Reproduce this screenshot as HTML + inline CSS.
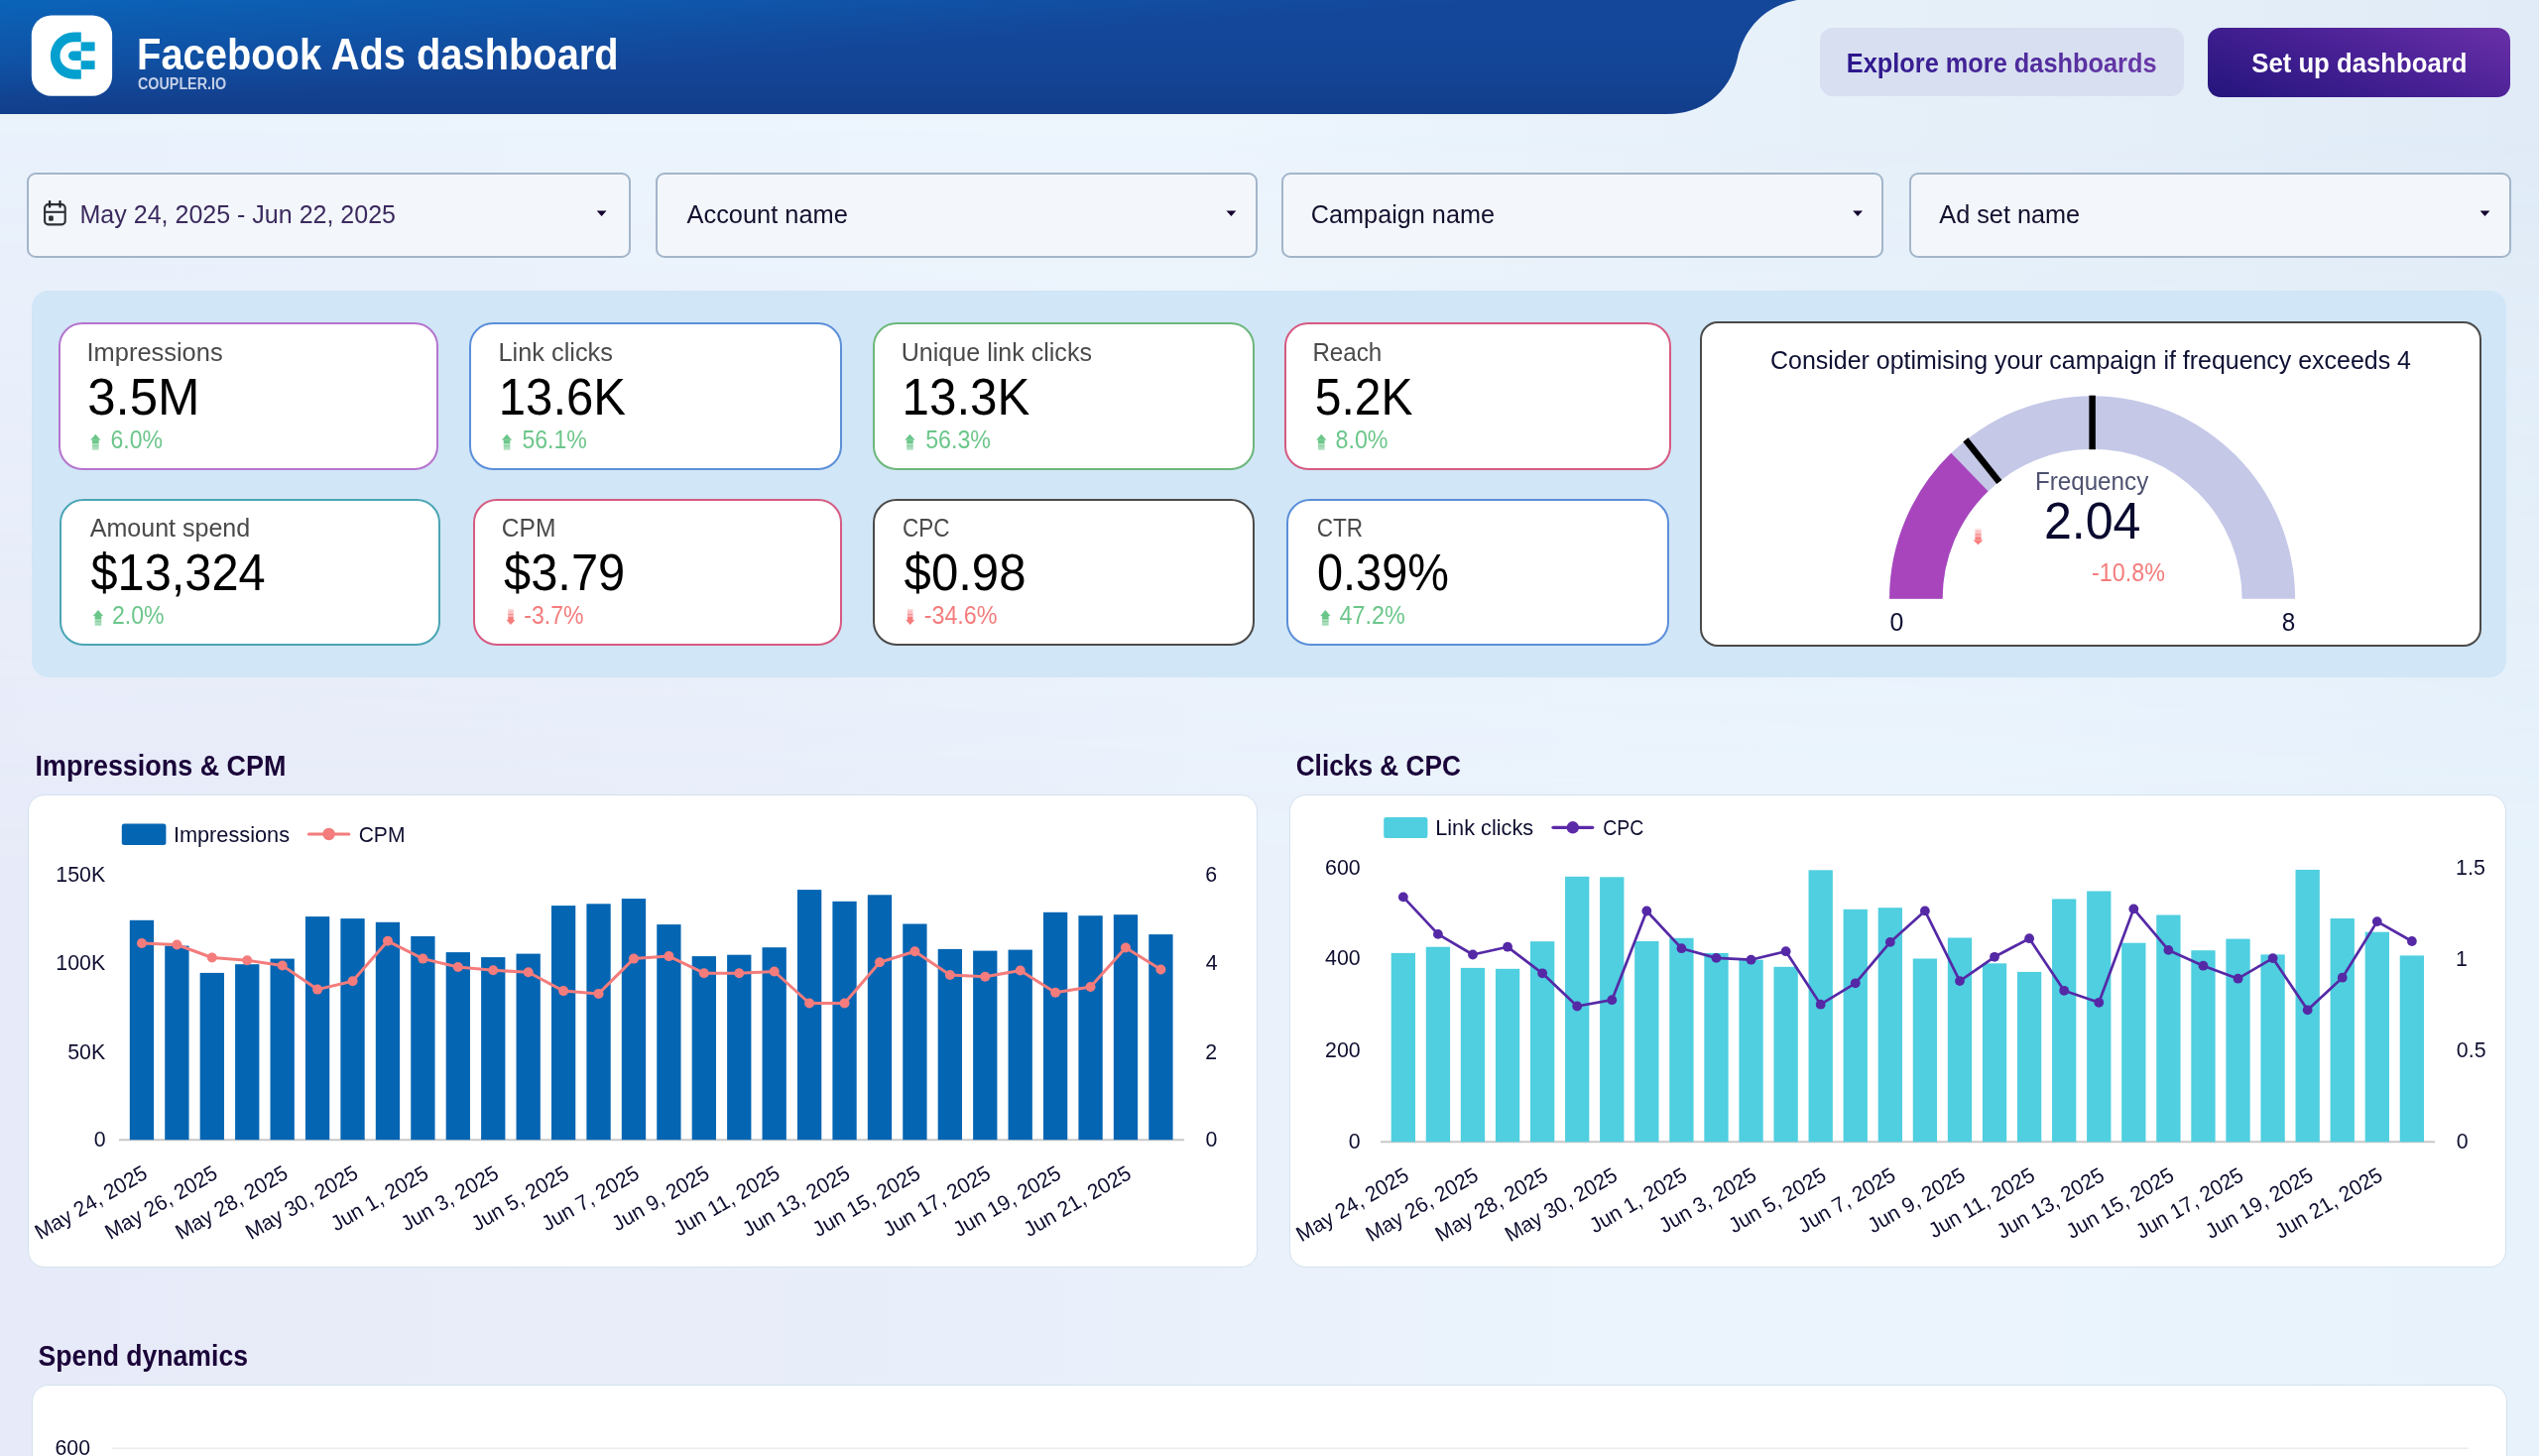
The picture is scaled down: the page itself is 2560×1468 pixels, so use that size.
<!DOCTYPE html>
<html><head><meta charset="utf-8"><title>Facebook Ads dashboard</title>
<style>
html,body{margin:0;padding:0;overflow:hidden}
body{width:2560px;height:1468px;overflow:hidden;position:relative;font-family:"Liberation Sans",sans-serif;
background:linear-gradient(90deg,#eaf2fc 0%,#edf5fd 45%,#e6f0f9 75%,#e0ebf7 100%)}
.bgb{left:0;top:0;width:2560px;height:1468px;background:linear-gradient(90deg,#e7eaf8 0%,#e8edf9 25%,#eaf1fb 50%,#ebf4fd 75%,#e7f2fb 100%);
-webkit-mask-image:linear-gradient(180deg,transparent 0%,transparent 8%,#000 60%,#000 100%);mask-image:linear-gradient(180deg,transparent 0%,transparent 8%,#000 60%,#000 100%)}
.a{position:absolute;box-sizing:border-box}
.dd{background:#f3f7fb;border:2px solid #a3b5ca;border-radius:9px}
.panel{background:#d1e6f6;border-radius:17px}
.card{background:#fff;border:2px solid #888;border-radius:24px}
.cc{background:#fff;border:1.6px solid #d3e2ee;border-radius:17px}
svg{position:absolute;left:0;top:0}
</style></head><body>

<div class="a bgb"></div>
<svg width="2560" height="130" style="z-index:0">
<defs>
<linearGradient id="hg" gradientUnits="userSpaceOnUse" x1="0" y1="0" x2="8.6" y2="114.4">
<stop offset="0" stop-color="#0a64b9"/><stop offset="1" stop-color="#14479a"/></linearGradient>
<linearGradient id="hg2" gradientUnits="userSpaceOnUse" x1="0" y1="0" x2="0" y2="115">
<stop offset="0" stop-color="#0e2a6a" stop-opacity="0"/><stop offset="0.55" stop-color="#0e2a6a" stop-opacity="0.05"/><stop offset="1" stop-color="#0e2a6a" stop-opacity="0.32"/></linearGradient>
</defs>
<path d="M0 0 H1812 C1770 8 1756 40 1752 58 C1744 95 1715 115 1680 115 H0 Z" fill="url(#hg)"/>
<path d="M0 0 H1812 C1770 8 1756 40 1752 58 C1744 95 1715 115 1680 115 H0 Z" fill="url(#hg2)"/>
</svg>
<div class="a" style="left:1835px;top:28px;width:367px;height:69px;background:#d8dff0;border-radius:13px"></div>
<div class="a" style="left:2226px;top:28px;width:305px;height:70px;border-radius:13px;background:linear-gradient(20deg,#24157c 0%,#4a2196 55%,#6a30a8 100%)"></div>
<div class="a dd" style="left:27.2px;top:173.9px;width:609.0px;height:86.2px"></div>
<div class="a dd" style="left:661.0px;top:173.9px;width:607.4px;height:86.2px"></div>
<div class="a dd" style="left:1291.5px;top:173.9px;width:607.4px;height:86.2px"></div>
<div class="a dd" style="left:1924.6px;top:173.9px;width:607.6px;height:86.2px"></div>
<div class="a panel" style="left:32px;top:293px;width:2495px;height:390px"></div>
<div class="a card" style="left:58.8px;top:325.0px;width:383.2px;height:149.0px;border-color:#b574cf"></div>
<div class="a card" style="left:473.4px;top:325.2px;width:375.4px;height:148.7px;border-color:#5b8fd9"></div>
<div class="a card" style="left:880.1px;top:325.2px;width:385.0px;height:148.5px;border-color:#6cb77b"></div>
<div class="a card" style="left:1294.7px;top:325.2px;width:390.3px;height:148.5px;border-color:#d65a82"></div>
<div class="a card" style="left:59.9px;top:502.5px;width:383.9px;height:148.7px;border-color:#4aa5b5"></div>
<div class="a card" style="left:476.5px;top:502.5px;width:372.2px;height:148.7px;border-color:#d65a82"></div>
<div class="a card" style="left:880.1px;top:502.5px;width:385.0px;height:148.7px;border-color:#4a4a4a"></div>
<div class="a card" style="left:1297.3px;top:502.5px;width:386.2px;height:148.7px;border-color:#5b8fd9"></div>
<div class="a card" style="left:1713.5px;top:324px;width:788px;height:327.5px;border-color:#4a4a4a;border-radius:18px"></div>
<div class="a cc" style="left:27.6px;top:800.6px;width:1240.4px;height:477.8px"></div>
<div class="a cc" style="left:1299.7px;top:800.6px;width:1227.6px;height:477.8px"></div>
<div class="a cc" style="left:32px;top:1396px;width:2495.5px;height:120px"></div>
<svg width="2560" height="1468" style="z-index:5;will-change:transform" font-family="Liberation Sans, sans-serif">
<defs>
<linearGradient id="btxt" x1="0" y1="0" x2="1" y2="0"><stop offset="0" stop-color="#2a168c"/><stop offset="1" stop-color="#6a3aa8"/></linearGradient>
</defs>
<rect x="31.8" y="15.5" width="81.3" height="81.3" rx="20" fill="#fff"/>
<path d="M81.8 32.55 H74.50 A23.65 23.65 0 0 0 74.50 79.85 H81.8 V70.20 H74.50 A14.0 14.0 0 0 1 74.50 42.20 H81.8 Z" fill="#03a0cf"/>
<path d="M81.8 51.4 H73.75 A4.75 4.75 0 0 0 73.75 60.9 H81.8 Z" fill="#03a0cf"/>
<rect x="81.6" y="42.4" width="14" height="9" fill="#03a0cf"/><rect x="81.6" y="61.2" width="14" height="8.7" fill="#03a0cf"/>
<text x="138.11" y="70.30" font-size="44.33" font-weight="700" fill="#ffffff" textLength="485.60" lengthAdjust="spacingAndGlyphs" >Facebook Ads dashboard</text>
<text x="139.03" y="89.80" font-size="16.13" font-weight="700" fill="#c3d0e8" textLength="89.09" lengthAdjust="spacingAndGlyphs" >COUPLER.IO</text>
<text x="1861.79" y="72.60" font-size="27.91" font-weight="700" fill="url(#btxt)" textLength="312.78" lengthAdjust="spacingAndGlyphs" >Explore more dashboards</text>
<text x="2270.23" y="72.60" font-size="27.91" font-weight="700" fill="#ffffff" textLength="217.26" lengthAdjust="spacingAndGlyphs" >Set up dashboard</text>
<text x="80.54" y="225.20" font-size="26.02" font-weight="400" fill="#3b2a5e" textLength="318.50" lengthAdjust="spacingAndGlyphs" >May 24, 2025 - Jun 22, 2025</text>
<text x="692.54" y="224.70" font-size="26.02" font-weight="400" fill="#14102e" textLength="162.35" lengthAdjust="spacingAndGlyphs" >Account name</text>
<text x="1321.84" y="224.70" font-size="26.02" font-weight="400" fill="#14102e" textLength="185.14" lengthAdjust="spacingAndGlyphs" >Campaign name</text>
<text x="1955.34" y="224.70" font-size="26.02" font-weight="400" fill="#14102e" textLength="141.78" lengthAdjust="spacingAndGlyphs" >Ad set name</text>
<path d="M601.7 212.6 L611.5 212.6 L606.6 217.9 Z" fill="#12002f"/>
<path d="M1236.5 212.6 L1246.3 212.6 L1241.4 217.9 Z" fill="#12002f"/>
<path d="M1868.2 212.6 L1878.0 212.6 L1873.1 217.9 Z" fill="#12002f"/>
<path d="M2500.6 212.6 L2510.4 212.6 L2505.5 217.9 Z" fill="#12002f"/>
<g fill="none" stroke="#2e3035" stroke-width="2.1"><rect x="45.1" y="206.1" width="20.6" height="20.3" rx="3.5"/><line x1="45.1" y1="213.8" x2="65.7" y2="213.8"/></g><g stroke="#23252a" stroke-width="2.3" stroke-linecap="round"><line x1="50.1" y1="203.2" x2="50.1" y2="208.6"/><line x1="60.5" y1="203.2" x2="60.5" y2="208.6"/></g><rect x="49.1" y="217.5" width="4.7" height="5.3" rx="1.2" fill="#2e3035"/>
<text x="87.55" y="363.80" font-size="25.73" font-weight="400" fill="#4a4a4a" textLength="137.06" lengthAdjust="spacingAndGlyphs" >Impressions</text>
<text x="88.29" y="417.50" font-size="51.75" font-weight="400" fill="#000000" textLength="113.25" lengthAdjust="spacingAndGlyphs" >3.5M</text>
<text x="111.55" y="451.80" font-size="25.15" font-weight="400" fill="#6cc68a" textLength="52.44" lengthAdjust="spacingAndGlyphs" >6.0%</text>
<path d="M96.35 437.70 L101.50 443.70 L91.20 443.70 Z" fill="#6cc68a"/><rect x="93.05" y="443.70" width="6.6" height="3.6" fill="#6cc68a"/><rect x="93.05" y="447.30" width="6.6" height="1.32" fill="#6cc68a" opacity="0.55"/><rect x="93.05" y="448.62" width="6.6" height="1.32" fill="#6cc68a" opacity="0.85"/><rect x="93.05" y="449.94" width="6.6" height="1.32" fill="#6cc68a" opacity="0.6"/><rect x="93.05" y="451.26" width="6.6" height="1.32" fill="#6cc68a" opacity="0.75"/><rect x="93.05" y="452.58" width="6.6" height="1.32" fill="#6cc68a" opacity="0.4"/>
<text x="502.51" y="363.80" font-size="25.73" font-weight="400" fill="#4a4a4a" textLength="115.46" lengthAdjust="spacingAndGlyphs" >Link clicks</text>
<text x="502.82" y="417.50" font-size="51.75" font-weight="400" fill="#000000" textLength="128.21" lengthAdjust="spacingAndGlyphs" >13.6K</text>
<text x="526.48" y="451.80" font-size="25.15" font-weight="400" fill="#6cc68a" textLength="65.38" lengthAdjust="spacingAndGlyphs" >56.1%</text>
<path d="M511.05 437.70 L516.20 443.70 L505.90 443.70 Z" fill="#6cc68a"/><rect x="507.75" y="443.70" width="6.6" height="3.6" fill="#6cc68a"/><rect x="507.75" y="447.30" width="6.6" height="1.32" fill="#6cc68a" opacity="0.55"/><rect x="507.75" y="448.62" width="6.6" height="1.32" fill="#6cc68a" opacity="0.85"/><rect x="507.75" y="449.94" width="6.6" height="1.32" fill="#6cc68a" opacity="0.6"/><rect x="507.75" y="451.26" width="6.6" height="1.32" fill="#6cc68a" opacity="0.75"/><rect x="507.75" y="452.58" width="6.6" height="1.32" fill="#6cc68a" opacity="0.4"/>
<text x="908.76" y="363.80" font-size="25.73" font-weight="400" fill="#4a4a4a" textLength="192.21" lengthAdjust="spacingAndGlyphs" >Unique link clicks</text>
<text x="909.61" y="417.50" font-size="51.75" font-weight="400" fill="#000000" textLength="128.73" lengthAdjust="spacingAndGlyphs" >13.3K</text>
<text x="933.17" y="451.80" font-size="25.15" font-weight="400" fill="#6cc68a" textLength="65.79" lengthAdjust="spacingAndGlyphs" >56.3%</text>
<path d="M917.45 437.70 L922.60 443.70 L912.30 443.70 Z" fill="#6cc68a"/><rect x="914.15" y="443.70" width="6.6" height="3.6" fill="#6cc68a"/><rect x="914.15" y="447.30" width="6.6" height="1.32" fill="#6cc68a" opacity="0.55"/><rect x="914.15" y="448.62" width="6.6" height="1.32" fill="#6cc68a" opacity="0.85"/><rect x="914.15" y="449.94" width="6.6" height="1.32" fill="#6cc68a" opacity="0.6"/><rect x="914.15" y="451.26" width="6.6" height="1.32" fill="#6cc68a" opacity="0.75"/><rect x="914.15" y="452.58" width="6.6" height="1.32" fill="#6cc68a" opacity="0.4"/>
<text x="1323.40" y="363.80" font-size="25.73" font-weight="400" fill="#4a4a4a" textLength="69.92" lengthAdjust="spacingAndGlyphs" >Reach</text>
<text x="1325.78" y="417.50" font-size="51.75" font-weight="400" fill="#000000" textLength="98.60" lengthAdjust="spacingAndGlyphs" >5.2K</text>
<text x="1346.61" y="451.80" font-size="25.15" font-weight="400" fill="#6cc68a" textLength="52.88" lengthAdjust="spacingAndGlyphs" >8.0%</text>
<path d="M1332.25 437.70 L1337.40 443.70 L1327.10 443.70 Z" fill="#6cc68a"/><rect x="1328.95" y="443.70" width="6.6" height="3.6" fill="#6cc68a"/><rect x="1328.95" y="447.30" width="6.6" height="1.32" fill="#6cc68a" opacity="0.55"/><rect x="1328.95" y="448.62" width="6.6" height="1.32" fill="#6cc68a" opacity="0.85"/><rect x="1328.95" y="449.94" width="6.6" height="1.32" fill="#6cc68a" opacity="0.6"/><rect x="1328.95" y="451.26" width="6.6" height="1.32" fill="#6cc68a" opacity="0.75"/><rect x="1328.95" y="452.58" width="6.6" height="1.32" fill="#6cc68a" opacity="0.4"/>
<text x="90.74" y="541.00" font-size="25.73" font-weight="400" fill="#4a4a4a" textLength="161.46" lengthAdjust="spacingAndGlyphs" >Amount spend</text>
<text x="91.51" y="594.50" font-size="51.75" font-weight="400" fill="#000000" textLength="176.14" lengthAdjust="spacingAndGlyphs" >$13,324</text>
<text x="113.05" y="628.60" font-size="25.15" font-weight="400" fill="#6cc68a" textLength="52.55" lengthAdjust="spacingAndGlyphs" >2.0%</text>
<path d="M98.95 615.00 L104.10 621.00 L93.80 621.00 Z" fill="#6cc68a"/><rect x="95.65" y="621.00" width="6.6" height="3.6" fill="#6cc68a"/><rect x="95.65" y="624.60" width="6.6" height="1.32" fill="#6cc68a" opacity="0.55"/><rect x="95.65" y="625.92" width="6.6" height="1.32" fill="#6cc68a" opacity="0.85"/><rect x="95.65" y="627.24" width="6.6" height="1.32" fill="#6cc68a" opacity="0.6"/><rect x="95.65" y="628.56" width="6.6" height="1.32" fill="#6cc68a" opacity="0.75"/><rect x="95.65" y="629.88" width="6.6" height="1.32" fill="#6cc68a" opacity="0.4"/>
<text x="505.87" y="541.00" font-size="25.73" font-weight="400" fill="#4a4a4a" textLength="54.54" lengthAdjust="spacingAndGlyphs" >CPM</text>
<text x="508.01" y="594.50" font-size="51.75" font-weight="400" fill="#000000" textLength="122.29" lengthAdjust="spacingAndGlyphs" >$3.79</text>
<text x="528.26" y="628.60" font-size="25.15" font-weight="400" fill="#f47c7c" textLength="60.24" lengthAdjust="spacingAndGlyphs" >-3.7%</text>
<rect x="512.21" y="613.90" width="5.58" height="1.6" fill="#f77d7d" opacity="0.3"/><rect x="512.21" y="615.50" width="5.58" height="1.6" fill="#f77d7d" opacity="0.5"/><rect x="512.21" y="617.10" width="5.58" height="1.6" fill="#f77d7d" opacity="0.45"/><rect x="512.21" y="618.70" width="5.58" height="1.6" fill="#f77d7d" opacity="0.85"/><rect x="512.21" y="620.30" width="5.58" height="1.6" fill="#f77d7d" opacity="0.6"/><rect x="512.21" y="621.90" width="5.58" height="3.2" fill="#f77d7d"/><path d="M510.50 625.00 L519.50 625.00 L515.00 629.90 Z" fill="#f77d7d"/>
<text x="909.97" y="541.00" font-size="25.73" font-weight="400" fill="#4a4a4a" textLength="47.54" lengthAdjust="spacingAndGlyphs" >CPC</text>
<text x="911.61" y="594.50" font-size="51.75" font-weight="400" fill="#000000" textLength="122.88" lengthAdjust="spacingAndGlyphs" >$0.98</text>
<text x="931.65" y="628.60" font-size="25.15" font-weight="400" fill="#f47c7c" textLength="73.93" lengthAdjust="spacingAndGlyphs" >-34.6%</text>
<rect x="914.91" y="613.90" width="5.58" height="1.6" fill="#f77d7d" opacity="0.3"/><rect x="914.91" y="615.50" width="5.58" height="1.6" fill="#f77d7d" opacity="0.5"/><rect x="914.91" y="617.10" width="5.58" height="1.6" fill="#f77d7d" opacity="0.45"/><rect x="914.91" y="618.70" width="5.58" height="1.6" fill="#f77d7d" opacity="0.85"/><rect x="914.91" y="620.30" width="5.58" height="1.6" fill="#f77d7d" opacity="0.6"/><rect x="914.91" y="621.90" width="5.58" height="3.2" fill="#f77d7d"/><path d="M913.20 625.00 L922.20 625.00 L917.70 629.90 Z" fill="#f77d7d"/>
<text x="1327.77" y="541.00" font-size="25.73" font-weight="400" fill="#4a4a4a" textLength="46.41" lengthAdjust="spacingAndGlyphs" >CTR</text>
<text x="1328.02" y="594.50" font-size="51.75" font-weight="400" fill="#000000" textLength="132.92" lengthAdjust="spacingAndGlyphs" >0.39%</text>
<text x="1350.57" y="628.60" font-size="25.15" font-weight="400" fill="#6cc68a" textLength="66.20" lengthAdjust="spacingAndGlyphs" >47.2%</text>
<path d="M1336.35 615.00 L1341.50 621.00 L1331.20 621.00 Z" fill="#6cc68a"/><rect x="1333.05" y="621.00" width="6.6" height="3.6" fill="#6cc68a"/><rect x="1333.05" y="624.60" width="6.6" height="1.32" fill="#6cc68a" opacity="0.55"/><rect x="1333.05" y="625.92" width="6.6" height="1.32" fill="#6cc68a" opacity="0.85"/><rect x="1333.05" y="627.24" width="6.6" height="1.32" fill="#6cc68a" opacity="0.6"/><rect x="1333.05" y="628.56" width="6.6" height="1.32" fill="#6cc68a" opacity="0.75"/><rect x="1333.05" y="629.88" width="6.6" height="1.32" fill="#6cc68a" opacity="0.4"/>
<path d="M1905.10 603.70 A204.5 204.5 0 0 1 2314.10 603.70 L2260.60 603.70 A151.0 151.0 0 0 0 1958.60 603.70 Z" fill="#c5c8e7"/>
<path d="M1905.10 603.70 A204.5 204.5 0 0 1 1967.29 456.84 L2004.52 495.26 A151.0 151.0 0 0 0 1958.60 603.70 Z" fill="#a845bd"/>
<line x1="2015.82" y1="485.99" x2="1981.87" y2="443.36" stroke="#000" stroke-width="6.5"/>
<line x1="2109.60" y1="453.20" x2="2109.60" y2="398.70" stroke="#000" stroke-width="6.5"/>
<text x="1785.05" y="372.00" font-size="26.45" font-weight="400" fill="#0e1033" textLength="645.85" lengthAdjust="spacingAndGlyphs" >Consider optimising your campaign if frequency exceeds 4</text>
<text x="2051.90" y="493.70" font-size="25.73" font-weight="400" fill="#4e5270" textLength="114.35" lengthAdjust="spacingAndGlyphs" >Frequency</text>
<text x="2060.89" y="543.30" font-size="51.45" font-weight="400" fill="#0a0a30" textLength="97.66" lengthAdjust="spacingAndGlyphs" >2.04</text>
<text x="2109.05" y="586.40" font-size="25.44" font-weight="400" fill="#f47c7c" textLength="73.83" lengthAdjust="spacingAndGlyphs" >-10.8%</text>
<rect x="1991.40" y="533.30" width="6.20" height="1.6" fill="#f77d7d" opacity="0.3"/><rect x="1991.40" y="534.90" width="6.20" height="1.6" fill="#f77d7d" opacity="0.5"/><rect x="1991.40" y="536.50" width="6.20" height="1.6" fill="#f77d7d" opacity="0.45"/><rect x="1991.40" y="538.10" width="6.20" height="1.6" fill="#f77d7d" opacity="0.85"/><rect x="1991.40" y="539.70" width="6.20" height="1.6" fill="#f77d7d" opacity="0.6"/><rect x="1991.40" y="541.30" width="6.20" height="3.2" fill="#f77d7d"/><path d="M1989.50 544.40 L1999.50 544.40 L1994.50 549.30 Z" fill="#f77d7d"/>
<text x="1905.40" y="636.20" font-size="26.45" font-weight="400" fill="#0e1033" textLength="13.86" lengthAdjust="spacingAndGlyphs" >0</text>
<text x="2300.67" y="636.20" font-size="26.45" font-weight="400" fill="#0e1033" textLength="13.49" lengthAdjust="spacingAndGlyphs" >8</text>
<text x="35.58" y="781.90" font-size="29.65" font-weight="700" fill="#1a0338" textLength="252.80" lengthAdjust="spacingAndGlyphs" >Impressions &amp; CPM</text>
<text x="1306.65" y="781.90" font-size="29.65" font-weight="700" fill="#1a0338" textLength="166.39" lengthAdjust="spacingAndGlyphs" >Clicks &amp; CPC</text>
<text x="38.60" y="1377.00" font-size="29.65" font-weight="700" fill="#1a0338" textLength="211.42" lengthAdjust="spacingAndGlyphs" >Spend dynamics</text>
<line x1="120" y1="1149.2" x2="1194" y2="1149.2" stroke="#c8c8c8" stroke-width="2"/>
<rect x="130.80" y="927.80" width="24.3" height="221.40" fill="#0465b3"/>
<rect x="166.23" y="953.60" width="24.3" height="195.60" fill="#0465b3"/>
<rect x="201.66" y="980.90" width="24.3" height="168.30" fill="#0465b3"/>
<rect x="237.09" y="972.20" width="24.3" height="177.00" fill="#0465b3"/>
<rect x="272.52" y="966.60" width="24.3" height="182.60" fill="#0465b3"/>
<rect x="307.95" y="924.10" width="24.3" height="225.10" fill="#0465b3"/>
<rect x="343.38" y="926.10" width="24.3" height="223.10" fill="#0465b3"/>
<rect x="378.81" y="929.80" width="24.3" height="219.40" fill="#0465b3"/>
<rect x="414.24" y="944.00" width="24.3" height="205.20" fill="#0465b3"/>
<rect x="449.67" y="960.10" width="24.3" height="189.10" fill="#0465b3"/>
<rect x="485.10" y="965.10" width="24.3" height="184.10" fill="#0465b3"/>
<rect x="520.53" y="961.60" width="24.3" height="187.60" fill="#0465b3"/>
<rect x="555.96" y="913.10" width="24.3" height="236.10" fill="#0465b3"/>
<rect x="591.39" y="911.30" width="24.3" height="237.90" fill="#0465b3"/>
<rect x="626.82" y="906.10" width="24.3" height="243.10" fill="#0465b3"/>
<rect x="662.25" y="932.10" width="24.3" height="217.10" fill="#0465b3"/>
<rect x="697.68" y="964.10" width="24.3" height="185.10" fill="#0465b3"/>
<rect x="733.11" y="962.70" width="24.3" height="186.50" fill="#0465b3"/>
<rect x="768.54" y="955.20" width="24.3" height="194.00" fill="#0465b3"/>
<rect x="803.97" y="897.10" width="24.3" height="252.10" fill="#0465b3"/>
<rect x="839.40" y="908.80" width="24.3" height="240.40" fill="#0465b3"/>
<rect x="874.83" y="902.30" width="24.3" height="246.90" fill="#0465b3"/>
<rect x="910.26" y="931.50" width="24.3" height="217.70" fill="#0465b3"/>
<rect x="945.69" y="956.90" width="24.3" height="192.30" fill="#0465b3"/>
<rect x="981.12" y="958.60" width="24.3" height="190.60" fill="#0465b3"/>
<rect x="1016.55" y="957.60" width="24.3" height="191.60" fill="#0465b3"/>
<rect x="1051.98" y="919.80" width="24.3" height="229.40" fill="#0465b3"/>
<rect x="1087.41" y="923.20" width="24.3" height="226.00" fill="#0465b3"/>
<rect x="1122.84" y="922.20" width="24.3" height="227.00" fill="#0465b3"/>
<rect x="1158.27" y="942.10" width="24.3" height="207.10" fill="#0465b3"/>
<polyline points="142.95,951.00 178.38,952.50 213.81,965.50 249.24,968.30 284.67,973.50 320.10,997.60 355.53,989.30 390.96,948.80 426.39,966.60 461.82,975.00 497.25,978.30 532.68,980.20 568.11,999.10 603.54,1001.90 638.97,966.60 674.40,964.10 709.83,981.20 745.26,981.20 780.69,979.50 816.12,1011.50 851.55,1011.50 886.98,970.30 922.41,959.30 957.84,983.00 993.27,984.70 1028.70,978.50 1064.13,1000.80 1099.56,995.00 1134.99,955.50 1170.42,977.50" fill="none" stroke="#f47c7c" stroke-width="3" stroke-linejoin="round"/>
<circle cx="142.95" cy="951.00" r="5" fill="#f47c7c"/>
<circle cx="178.38" cy="952.50" r="5" fill="#f47c7c"/>
<circle cx="213.81" cy="965.50" r="5" fill="#f47c7c"/>
<circle cx="249.24" cy="968.30" r="5" fill="#f47c7c"/>
<circle cx="284.67" cy="973.50" r="5" fill="#f47c7c"/>
<circle cx="320.10" cy="997.60" r="5" fill="#f47c7c"/>
<circle cx="355.53" cy="989.30" r="5" fill="#f47c7c"/>
<circle cx="390.96" cy="948.80" r="5" fill="#f47c7c"/>
<circle cx="426.39" cy="966.60" r="5" fill="#f47c7c"/>
<circle cx="461.82" cy="975.00" r="5" fill="#f47c7c"/>
<circle cx="497.25" cy="978.30" r="5" fill="#f47c7c"/>
<circle cx="532.68" cy="980.20" r="5" fill="#f47c7c"/>
<circle cx="568.11" cy="999.10" r="5" fill="#f47c7c"/>
<circle cx="603.54" cy="1001.90" r="5" fill="#f47c7c"/>
<circle cx="638.97" cy="966.60" r="5" fill="#f47c7c"/>
<circle cx="674.40" cy="964.10" r="5" fill="#f47c7c"/>
<circle cx="709.83" cy="981.20" r="5" fill="#f47c7c"/>
<circle cx="745.26" cy="981.20" r="5" fill="#f47c7c"/>
<circle cx="780.69" cy="979.50" r="5" fill="#f47c7c"/>
<circle cx="816.12" cy="1011.50" r="5" fill="#f47c7c"/>
<circle cx="851.55" cy="1011.50" r="5" fill="#f47c7c"/>
<circle cx="886.98" cy="970.30" r="5" fill="#f47c7c"/>
<circle cx="922.41" cy="959.30" r="5" fill="#f47c7c"/>
<circle cx="957.84" cy="983.00" r="5" fill="#f47c7c"/>
<circle cx="993.27" cy="984.70" r="5" fill="#f47c7c"/>
<circle cx="1028.70" cy="978.50" r="5" fill="#f47c7c"/>
<circle cx="1064.13" cy="1000.80" r="5" fill="#f47c7c"/>
<circle cx="1099.56" cy="995.00" r="5" fill="#f47c7c"/>
<circle cx="1134.99" cy="955.50" r="5" fill="#f47c7c"/>
<circle cx="1170.42" cy="977.50" r="5" fill="#f47c7c"/>
<rect x="122.8" y="830.6" width="44.6" height="21.3" rx="2.5" fill="#0465b3"/>
<text x="174.89" y="848.60" font-size="22.24" font-weight="400" fill="#0e0e30" textLength="117.19" lengthAdjust="spacingAndGlyphs" >Impressions</text>
<line x1="311.5" y1="841" x2="351.8" y2="841" stroke="#f47c7c" stroke-width="3.2" stroke-linecap="round"/><circle cx="331.6" cy="841" r="6.2" fill="#f47c7c"/>
<text x="361.65" y="848.60" font-size="22.24" font-weight="400" fill="#0e0e30" textLength="46.78" lengthAdjust="spacingAndGlyphs" >CPM</text>
<text x="56.32" y="888.70" font-size="22.24" font-weight="400" fill="#0e0e30" textLength="49.86" lengthAdjust="spacingAndGlyphs">150K</text>
<text x="56.32" y="977.50" font-size="22.24" font-weight="400" fill="#0e0e30" textLength="49.86" lengthAdjust="spacingAndGlyphs">100K</text>
<text x="68.17" y="1067.50" font-size="22.24" font-weight="400" fill="#0e0e30" textLength="37.99" lengthAdjust="spacingAndGlyphs">50K</text>
<text x="94.85" y="1156.30" font-size="22.24" font-weight="400" fill="#0e0e30" textLength="11.87" lengthAdjust="spacingAndGlyphs">0</text>
<text x="1215.23" y="888.70" font-size="22.24" font-weight="400" fill="#0e0e30" textLength="11.87" lengthAdjust="spacingAndGlyphs">6</text>
<text x="1215.82" y="977.90" font-size="22.24" font-weight="400" fill="#0e0e30" textLength="11.87" lengthAdjust="spacingAndGlyphs">4</text>
<text x="1215.23" y="1067.50" font-size="22.24" font-weight="400" fill="#0e0e30" textLength="11.87" lengthAdjust="spacingAndGlyphs">2</text>
<text x="1215.45" y="1156.30" font-size="22.24" font-weight="400" fill="#0e0e30" textLength="11.87" lengthAdjust="spacingAndGlyphs">0</text>
<line x1="1392" y1="1151.3" x2="2455" y2="1151.3" stroke="#c8c8c8" stroke-width="2"/>
<rect x="1402.70" y="960.90" width="24.3" height="190.40" fill="#4fcfe0"/>
<rect x="1437.77" y="954.70" width="24.3" height="196.60" fill="#4fcfe0"/>
<rect x="1472.84" y="975.90" width="24.3" height="175.40" fill="#4fcfe0"/>
<rect x="1507.91" y="976.80" width="24.3" height="174.50" fill="#4fcfe0"/>
<rect x="1542.98" y="949.20" width="24.3" height="202.10" fill="#4fcfe0"/>
<rect x="1578.05" y="883.80" width="24.3" height="267.50" fill="#4fcfe0"/>
<rect x="1613.12" y="884.30" width="24.3" height="267.00" fill="#4fcfe0"/>
<rect x="1648.19" y="949.00" width="24.3" height="202.30" fill="#4fcfe0"/>
<rect x="1683.26" y="945.80" width="24.3" height="205.50" fill="#4fcfe0"/>
<rect x="1718.33" y="960.90" width="24.3" height="190.40" fill="#4fcfe0"/>
<rect x="1753.40" y="967.70" width="24.3" height="183.60" fill="#4fcfe0"/>
<rect x="1788.47" y="974.80" width="24.3" height="176.50" fill="#4fcfe0"/>
<rect x="1823.54" y="877.30" width="24.3" height="274.00" fill="#4fcfe0"/>
<rect x="1858.61" y="916.80" width="24.3" height="234.50" fill="#4fcfe0"/>
<rect x="1893.68" y="915.20" width="24.3" height="236.10" fill="#4fcfe0"/>
<rect x="1928.75" y="966.50" width="24.3" height="184.80" fill="#4fcfe0"/>
<rect x="1963.82" y="945.50" width="24.3" height="205.80" fill="#4fcfe0"/>
<rect x="1998.89" y="971.30" width="24.3" height="180.00" fill="#4fcfe0"/>
<rect x="2033.96" y="979.90" width="24.3" height="171.40" fill="#4fcfe0"/>
<rect x="2069.03" y="906.40" width="24.3" height="244.90" fill="#4fcfe0"/>
<rect x="2104.10" y="898.50" width="24.3" height="252.80" fill="#4fcfe0"/>
<rect x="2139.17" y="950.70" width="24.3" height="200.60" fill="#4fcfe0"/>
<rect x="2174.24" y="922.50" width="24.3" height="228.80" fill="#4fcfe0"/>
<rect x="2209.31" y="958.20" width="24.3" height="193.10" fill="#4fcfe0"/>
<rect x="2244.38" y="946.60" width="24.3" height="204.70" fill="#4fcfe0"/>
<rect x="2279.45" y="962.40" width="24.3" height="188.90" fill="#4fcfe0"/>
<rect x="2314.52" y="876.90" width="24.3" height="274.40" fill="#4fcfe0"/>
<rect x="2349.59" y="926.00" width="24.3" height="225.30" fill="#4fcfe0"/>
<rect x="2384.66" y="939.70" width="24.3" height="211.60" fill="#4fcfe0"/>
<rect x="2419.73" y="963.40" width="24.3" height="187.90" fill="#4fcfe0"/>
<polyline points="1414.85,904.40 1449.92,941.90 1484.99,962.50 1520.06,954.70 1555.13,981.30 1590.20,1014.50 1625.27,1008.20 1660.34,918.50 1695.41,956.20 1730.48,965.90 1765.55,967.70 1800.62,959.20 1835.69,1012.70 1870.76,991.30 1905.83,949.90 1940.90,918.40 1975.97,989.10 2011.04,964.80 2046.11,946.20 2081.18,998.80 2116.25,1010.80 2151.32,916.40 2186.39,957.90 2221.46,973.70 2256.53,986.70 2291.60,966.10 2326.67,1018.30 2361.74,985.70 2396.81,929.10 2431.88,949.00" fill="none" stroke="#5529a6" stroke-width="2.7" stroke-linejoin="round"/>
<circle cx="1414.85" cy="904.40" r="4.9" fill="#5529a6"/>
<circle cx="1449.92" cy="941.90" r="4.9" fill="#5529a6"/>
<circle cx="1484.99" cy="962.50" r="4.9" fill="#5529a6"/>
<circle cx="1520.06" cy="954.70" r="4.9" fill="#5529a6"/>
<circle cx="1555.13" cy="981.30" r="4.9" fill="#5529a6"/>
<circle cx="1590.20" cy="1014.50" r="4.9" fill="#5529a6"/>
<circle cx="1625.27" cy="1008.20" r="4.9" fill="#5529a6"/>
<circle cx="1660.34" cy="918.50" r="4.9" fill="#5529a6"/>
<circle cx="1695.41" cy="956.20" r="4.9" fill="#5529a6"/>
<circle cx="1730.48" cy="965.90" r="4.9" fill="#5529a6"/>
<circle cx="1765.55" cy="967.70" r="4.9" fill="#5529a6"/>
<circle cx="1800.62" cy="959.20" r="4.9" fill="#5529a6"/>
<circle cx="1835.69" cy="1012.70" r="4.9" fill="#5529a6"/>
<circle cx="1870.76" cy="991.30" r="4.9" fill="#5529a6"/>
<circle cx="1905.83" cy="949.90" r="4.9" fill="#5529a6"/>
<circle cx="1940.90" cy="918.40" r="4.9" fill="#5529a6"/>
<circle cx="1975.97" cy="989.10" r="4.9" fill="#5529a6"/>
<circle cx="2011.04" cy="964.80" r="4.9" fill="#5529a6"/>
<circle cx="2046.11" cy="946.20" r="4.9" fill="#5529a6"/>
<circle cx="2081.18" cy="998.80" r="4.9" fill="#5529a6"/>
<circle cx="2116.25" cy="1010.80" r="4.9" fill="#5529a6"/>
<circle cx="2151.32" cy="916.40" r="4.9" fill="#5529a6"/>
<circle cx="2186.39" cy="957.90" r="4.9" fill="#5529a6"/>
<circle cx="2221.46" cy="973.70" r="4.9" fill="#5529a6"/>
<circle cx="2256.53" cy="986.70" r="4.9" fill="#5529a6"/>
<circle cx="2291.60" cy="966.10" r="4.9" fill="#5529a6"/>
<circle cx="2326.67" cy="1018.30" r="4.9" fill="#5529a6"/>
<circle cx="2361.74" cy="985.70" r="4.9" fill="#5529a6"/>
<circle cx="2396.81" cy="929.10" r="4.9" fill="#5529a6"/>
<circle cx="2431.88" cy="949.00" r="4.9" fill="#5529a6"/>
<rect x="1395.2" y="823.9" width="44.2" height="21" rx="2.5" fill="#4fcfe0"/>
<text x="1447.21" y="841.50" font-size="22.24" font-weight="400" fill="#0e0e30" textLength="98.94" lengthAdjust="spacingAndGlyphs" >Link clicks</text>
<line x1="1566" y1="834.3" x2="1605.7" y2="834.3" stroke="#5b2aa8" stroke-width="3.2" stroke-linecap="round"/><circle cx="1585.8" cy="834.3" r="6.2" fill="#5b2aa8"/>
<text x="1616.13" y="841.50" font-size="22.24" font-weight="400" fill="#0e0e30" textLength="41.08" lengthAdjust="spacingAndGlyphs" >CPC</text>
<text x="1336.10" y="881.70" font-size="22.24" font-weight="400" fill="#0e0e30" textLength="35.62" lengthAdjust="spacingAndGlyphs">600</text>
<text x="1336.10" y="973.30" font-size="22.24" font-weight="400" fill="#0e0e30" textLength="35.62" lengthAdjust="spacingAndGlyphs">400</text>
<text x="1336.10" y="1065.90" font-size="22.24" font-weight="400" fill="#0e0e30" textLength="35.62" lengthAdjust="spacingAndGlyphs">200</text>
<text x="1359.85" y="1158.40" font-size="22.24" font-weight="400" fill="#0e0e30" textLength="11.87" lengthAdjust="spacingAndGlyphs">0</text>
<text x="2476.10" y="882.00" font-size="22.24" font-weight="400" fill="#0e0e30" textLength="29.68" lengthAdjust="spacingAndGlyphs">1.5</text>
<text x="2476.10" y="973.70" font-size="22.24" font-weight="400" fill="#0e0e30" textLength="11.87" lengthAdjust="spacingAndGlyphs">1</text>
<text x="2476.85" y="1065.70" font-size="22.24" font-weight="400" fill="#0e0e30" textLength="29.68" lengthAdjust="spacingAndGlyphs">0.5</text>
<text x="2476.85" y="1158.00" font-size="22.24" font-weight="400" fill="#0e0e30" textLength="11.87" lengthAdjust="spacingAndGlyphs">0</text>
<text transform="translate(150.15,1187.00) rotate(-30)" x="-126.72" y="0" font-size="21.51" fill="#0e0e30" textLength="126.61" lengthAdjust="spacingAndGlyphs">May 24, 2025</text>
<text transform="translate(1422.05,1189.10) rotate(-30)" x="-126.72" y="0" font-size="21.51" fill="#0e0e30" textLength="126.61" lengthAdjust="spacingAndGlyphs">May 24, 2025</text>
<text transform="translate(221.01,1187.00) rotate(-30)" x="-126.72" y="0" font-size="21.51" fill="#0e0e30" textLength="126.61" lengthAdjust="spacingAndGlyphs">May 26, 2025</text>
<text transform="translate(1492.19,1189.10) rotate(-30)" x="-126.72" y="0" font-size="21.51" fill="#0e0e30" textLength="126.61" lengthAdjust="spacingAndGlyphs">May 26, 2025</text>
<text transform="translate(291.87,1187.00) rotate(-30)" x="-126.72" y="0" font-size="21.51" fill="#0e0e30" textLength="126.61" lengthAdjust="spacingAndGlyphs">May 28, 2025</text>
<text transform="translate(1562.33,1189.10) rotate(-30)" x="-126.72" y="0" font-size="21.51" fill="#0e0e30" textLength="126.61" lengthAdjust="spacingAndGlyphs">May 28, 2025</text>
<text transform="translate(362.73,1187.00) rotate(-30)" x="-126.72" y="0" font-size="21.51" fill="#0e0e30" textLength="126.61" lengthAdjust="spacingAndGlyphs">May 30, 2025</text>
<text transform="translate(1632.47,1189.10) rotate(-30)" x="-126.72" y="0" font-size="21.51" fill="#0e0e30" textLength="126.61" lengthAdjust="spacingAndGlyphs">May 30, 2025</text>
<text transform="translate(433.59,1187.00) rotate(-30)" x="-109.33" y="0" font-size="21.51" fill="#0e0e30" textLength="109.20" lengthAdjust="spacingAndGlyphs">Jun 1, 2025</text>
<text transform="translate(1702.61,1189.10) rotate(-30)" x="-109.33" y="0" font-size="21.51" fill="#0e0e30" textLength="109.20" lengthAdjust="spacingAndGlyphs">Jun 1, 2025</text>
<text transform="translate(504.45,1187.00) rotate(-30)" x="-109.33" y="0" font-size="21.51" fill="#0e0e30" textLength="109.20" lengthAdjust="spacingAndGlyphs">Jun 3, 2025</text>
<text transform="translate(1772.75,1189.10) rotate(-30)" x="-109.33" y="0" font-size="21.51" fill="#0e0e30" textLength="109.20" lengthAdjust="spacingAndGlyphs">Jun 3, 2025</text>
<text transform="translate(575.31,1187.00) rotate(-30)" x="-109.33" y="0" font-size="21.51" fill="#0e0e30" textLength="109.20" lengthAdjust="spacingAndGlyphs">Jun 5, 2025</text>
<text transform="translate(1842.89,1189.10) rotate(-30)" x="-109.33" y="0" font-size="21.51" fill="#0e0e30" textLength="109.20" lengthAdjust="spacingAndGlyphs">Jun 5, 2025</text>
<text transform="translate(646.17,1187.00) rotate(-30)" x="-109.33" y="0" font-size="21.51" fill="#0e0e30" textLength="109.20" lengthAdjust="spacingAndGlyphs">Jun 7, 2025</text>
<text transform="translate(1913.03,1189.10) rotate(-30)" x="-109.33" y="0" font-size="21.51" fill="#0e0e30" textLength="109.20" lengthAdjust="spacingAndGlyphs">Jun 7, 2025</text>
<text transform="translate(717.03,1187.00) rotate(-30)" x="-109.33" y="0" font-size="21.51" fill="#0e0e30" textLength="109.20" lengthAdjust="spacingAndGlyphs">Jun 9, 2025</text>
<text transform="translate(1983.17,1189.10) rotate(-30)" x="-109.33" y="0" font-size="21.51" fill="#0e0e30" textLength="109.20" lengthAdjust="spacingAndGlyphs">Jun 9, 2025</text>
<text transform="translate(787.89,1187.00) rotate(-30)" x="-119.41" y="0" font-size="21.51" fill="#0e0e30" textLength="119.27" lengthAdjust="spacingAndGlyphs">Jun 11, 2025</text>
<text transform="translate(2053.31,1189.10) rotate(-30)" x="-119.41" y="0" font-size="21.51" fill="#0e0e30" textLength="119.27" lengthAdjust="spacingAndGlyphs">Jun 11, 2025</text>
<text transform="translate(858.75,1187.00) rotate(-30)" x="-120.98" y="0" font-size="21.51" fill="#0e0e30" textLength="120.82" lengthAdjust="spacingAndGlyphs">Jun 13, 2025</text>
<text transform="translate(2123.45,1189.10) rotate(-30)" x="-120.98" y="0" font-size="21.51" fill="#0e0e30" textLength="120.82" lengthAdjust="spacingAndGlyphs">Jun 13, 2025</text>
<text transform="translate(929.61,1187.00) rotate(-30)" x="-120.98" y="0" font-size="21.51" fill="#0e0e30" textLength="120.82" lengthAdjust="spacingAndGlyphs">Jun 15, 2025</text>
<text transform="translate(2193.59,1189.10) rotate(-30)" x="-120.98" y="0" font-size="21.51" fill="#0e0e30" textLength="120.82" lengthAdjust="spacingAndGlyphs">Jun 15, 2025</text>
<text transform="translate(1000.47,1187.00) rotate(-30)" x="-120.98" y="0" font-size="21.51" fill="#0e0e30" textLength="120.82" lengthAdjust="spacingAndGlyphs">Jun 17, 2025</text>
<text transform="translate(2263.73,1189.10) rotate(-30)" x="-120.98" y="0" font-size="21.51" fill="#0e0e30" textLength="120.82" lengthAdjust="spacingAndGlyphs">Jun 17, 2025</text>
<text transform="translate(1071.33,1187.00) rotate(-30)" x="-120.98" y="0" font-size="21.51" fill="#0e0e30" textLength="120.82" lengthAdjust="spacingAndGlyphs">Jun 19, 2025</text>
<text transform="translate(2333.87,1189.10) rotate(-30)" x="-120.98" y="0" font-size="21.51" fill="#0e0e30" textLength="120.82" lengthAdjust="spacingAndGlyphs">Jun 19, 2025</text>
<text transform="translate(1142.19,1187.00) rotate(-30)" x="-120.98" y="0" font-size="21.51" fill="#0e0e30" textLength="120.82" lengthAdjust="spacingAndGlyphs">Jun 21, 2025</text>
<text transform="translate(2404.01,1189.10) rotate(-30)" x="-120.98" y="0" font-size="21.51" fill="#0e0e30" textLength="120.82" lengthAdjust="spacingAndGlyphs">Jun 21, 2025</text>
<text x="55.54" y="1467.30" font-size="21.95" font-weight="400" fill="#0e0e30" textLength="35.48" lengthAdjust="spacingAndGlyphs" >600</text>
<line x1="112.5" y1="1460.2" x2="2489" y2="1460.2" stroke="#ececec" stroke-width="1.5"/>
</svg>
</body></html>
